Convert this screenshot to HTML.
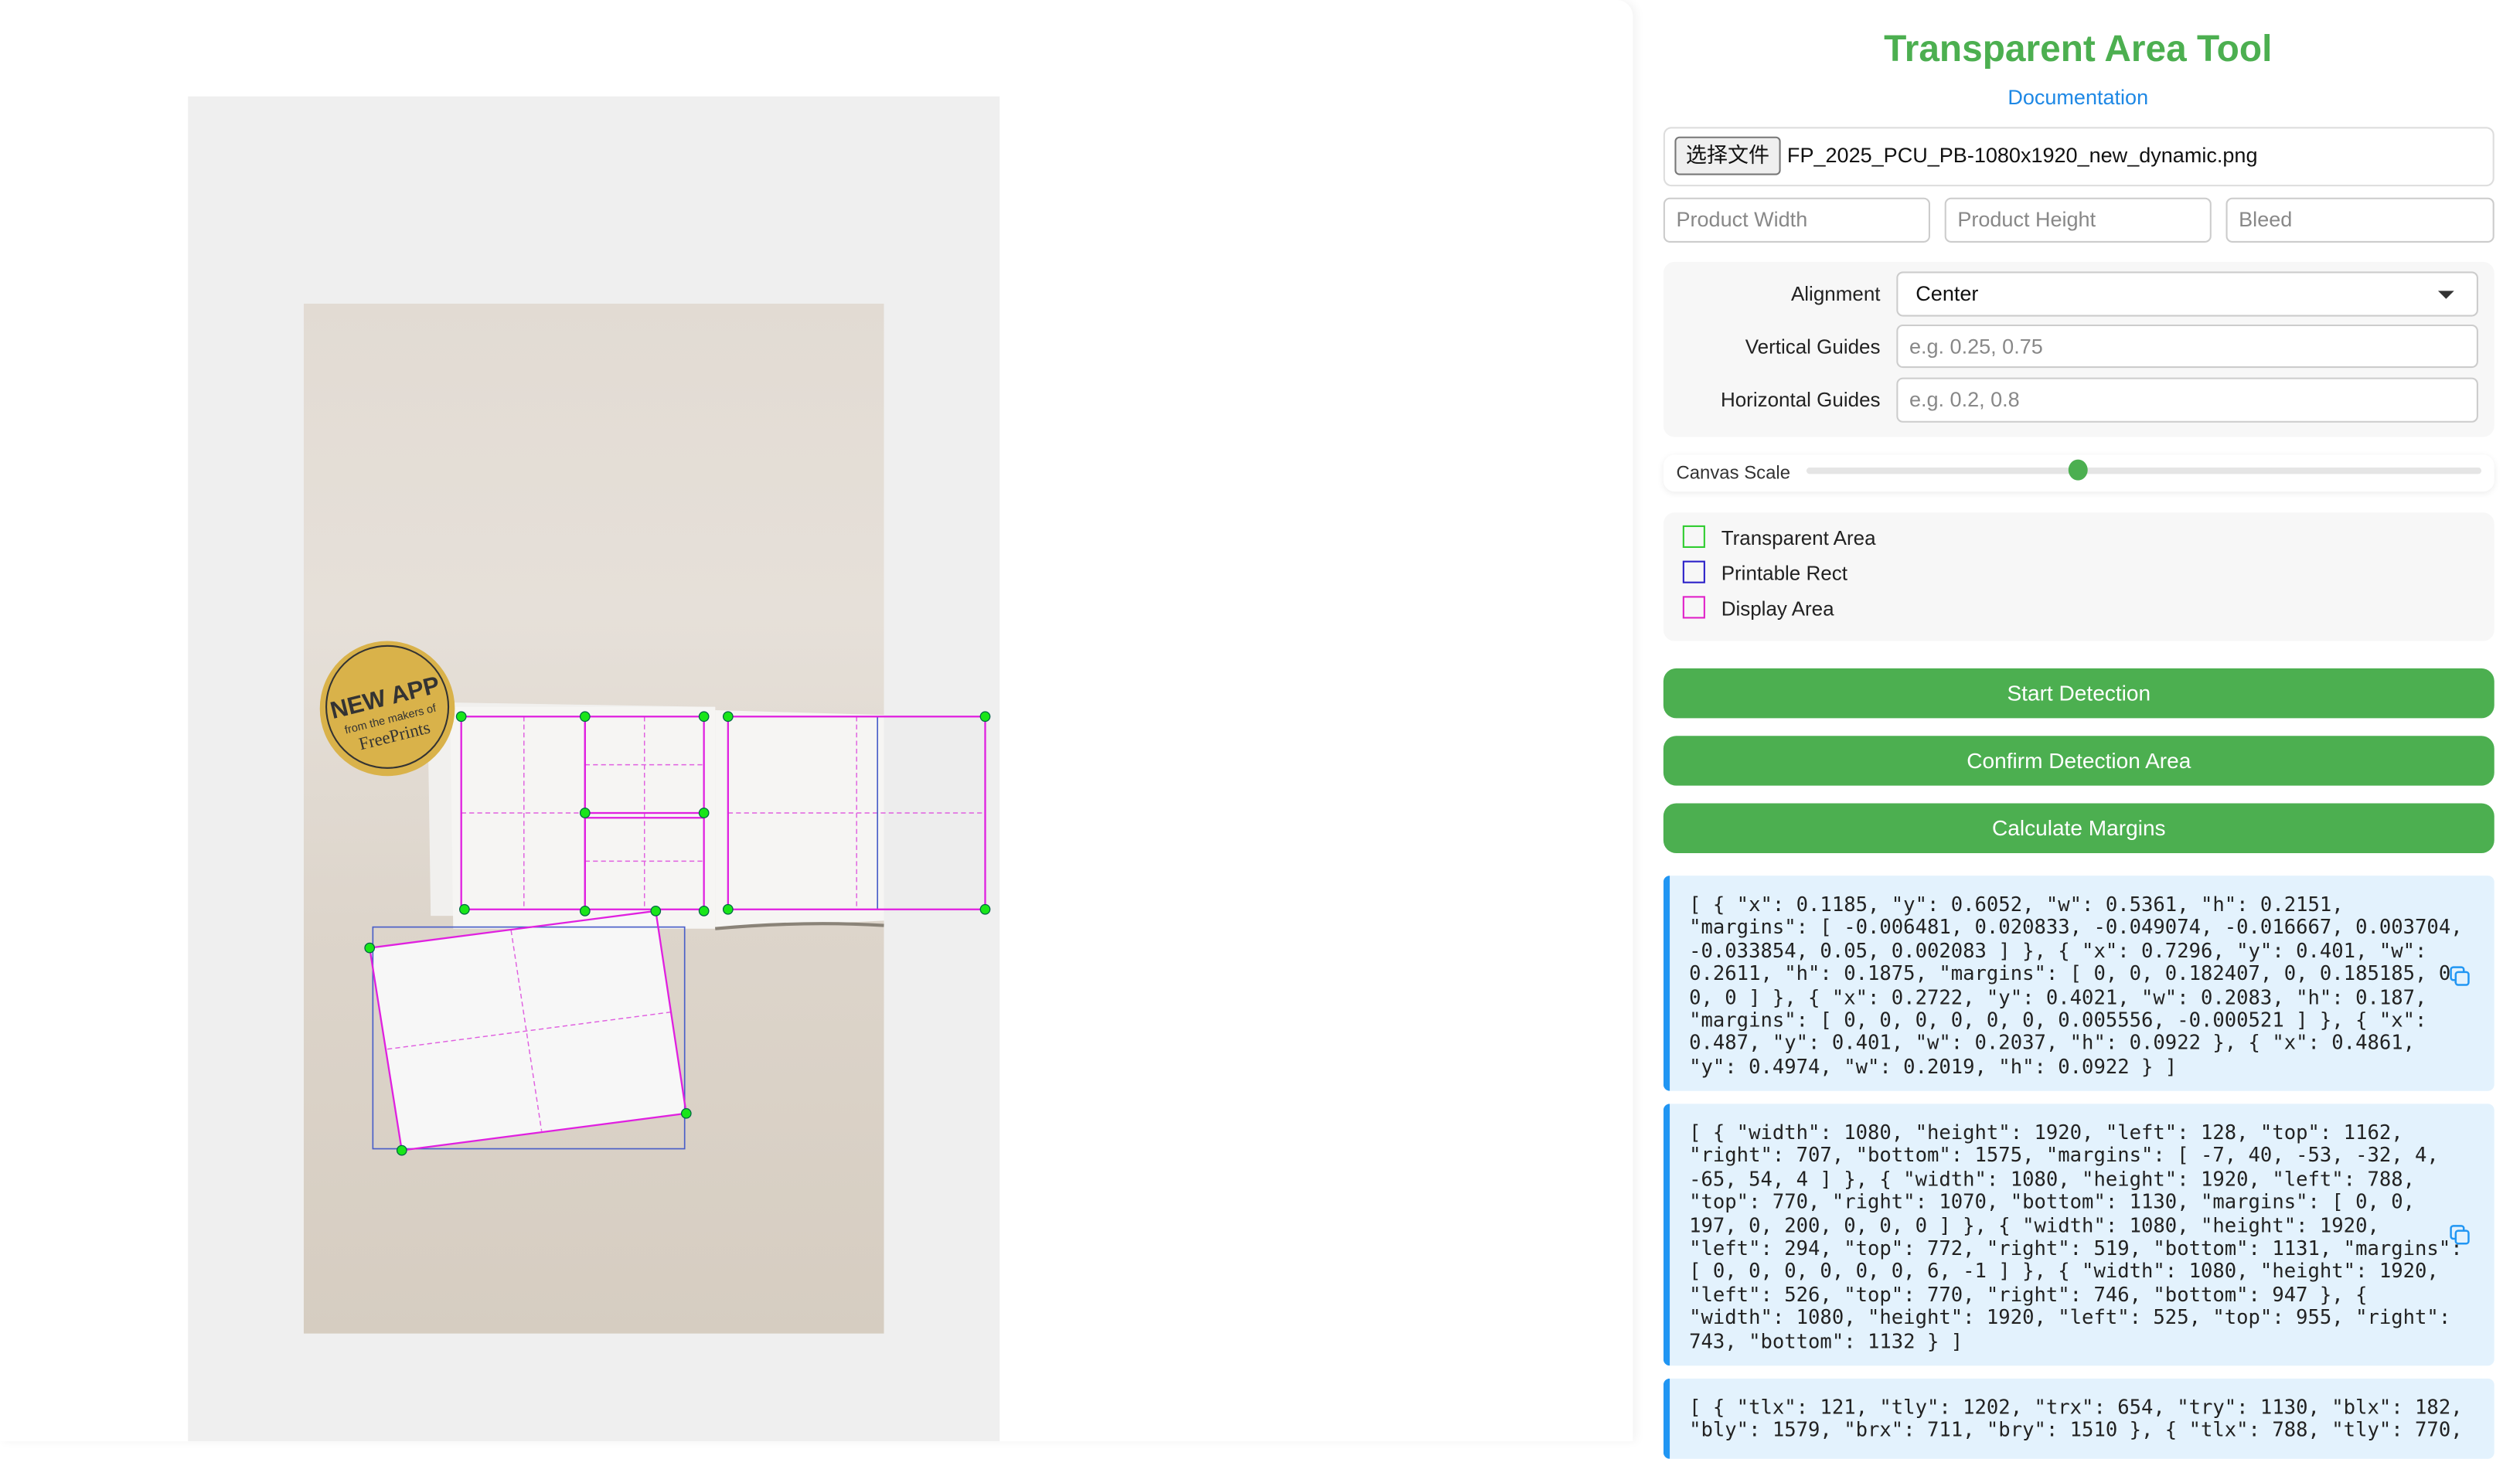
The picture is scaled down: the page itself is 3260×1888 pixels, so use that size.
<!DOCTYPE html>
<html><head><meta charset="utf-8">
<style>
html,body{margin:0;padding:0;width:3260px;height:1864px;overflow:hidden;background:#fff;}
#w{position:absolute;left:0;top:0;width:1568px;height:897px;transform:scale(2.07908);transform-origin:0 0;font-family:"Liberation Sans","Noto Sans CJK SC",sans-serif;}
.a{position:absolute;box-sizing:border-box;}
#left{left:0;top:0;width:1016px;height:897px;background:#fff;border-radius:0 10px 0 0;box-shadow:2px 0 6px rgba(0,0,0,0.05);}
#gray{left:117px;top:60px;width:505px;height:837px;background:#efefef;}
#img{left:189px;top:189px;width:361px;height:641px;background:linear-gradient(180deg,#e2dbd3 0%,#e6e0d9 30%,#ddd5cb 60%,#d6cdc1 100%);}
.in{border:1px solid #ccc;border-radius:4px;background:#fff;font-size:13px;color:#888;padding-left:7px;line-height:26px;}
.lbl{font-size:12.5px;color:#222;text-align:right;width:130px;left:1040px;}
.btn{left:1035px;width:517px;height:31px;background:#4caf50;border-radius:8px;color:#fff;font-size:13.5px;text-align:center;line-height:31px;}
.code{left:1035px;width:517px;background:#e3f2fd;border-left:4px solid #2196f3;border-radius:4px;padding:11px 0 0 12px;font-family:"DejaVu Sans Mono","Liberation Mono",monospace;font-size:12.3px;line-height:14.4px;color:#222;white-space:pre;overflow:hidden;}
.lg{left:1047px;width:14px;height:14px;border:1.3px solid;}
.lt{left:1071px;font-size:12.5px;color:#222;}
</style></head><body><div id="w">
<div class="a" style="left:1016px;top:0;width:552px;height:897px;background:#fff;"></div>
<div class="a" id="left"></div>
<div class="a" id="gray"></div>
<div class="a" id="img"></div>
<svg class="a" style="left:0;top:0" width="1016" height="897">
 <polygon points="266,437 445,440 445,570 268,570" fill="#f1f0ee"/>
 <polygon points="280,440 445,440 445,578 282,578" fill="#f6f5f3"/>
 <polygon points="445,442 550,445 550,573 445,578" fill="#f6f5f3"/>
 <path d="M445,578 Q500,573 550,576" stroke="#8a8378" stroke-width="2" fill="none"/>
 <rect x="550" y="445" width="65" height="123" fill="#ededed"/>
 <polygon points="230,590 408,567 427,693 250,716" fill="#f7f7f7"/>
 <circle cx="241" cy="441" r="42" fill="#d9b24a"/>
 <circle cx="241" cy="440" r="38" fill="none" stroke="#333" stroke-width="1"/>
 <g transform="rotate(-14 241 440)" font-family="Liberation Sans,sans-serif" fill="#333" text-anchor="middle">
  <text x="241" y="439" font-size="15" font-weight="bold">NEW APP</text>
  <text x="241" y="450" font-size="7">from the makers of</text>
  <text x="241" y="462" font-size="11" font-family="Liberation Serif,serif">FreePrints</text>
 </g>
 <g stroke="#e060e0" stroke-width="0.7" stroke-dasharray="3,2" fill="none">
  <line x1="326" y1="446" x2="326" y2="566"/><line x1="287" y1="506" x2="364" y2="506"/>
  <line x1="401" y1="446" x2="401" y2="566"/><line x1="364" y1="476" x2="438" y2="476"/><line x1="364" y1="536" x2="438" y2="536"/>
  <line x1="533" y1="446" x2="533" y2="566"/><line x1="453" y1="506" x2="613" y2="506"/>
  <line x1="318" y1="579" x2="337" y2="704"/><line x1="241" y1="653" x2="417" y2="630"/>
 </g>
 <g stroke="#4a5fc8" stroke-width="0.8" fill="none">
  <rect x="232" y="577" width="194" height="138"/>
  <line x1="546" y1="446" x2="546" y2="566"/>
 </g>
 <g stroke="#e020e0" stroke-width="1.1" fill="none">
  <rect x="287" y="446" width="77" height="120"/>
  <rect x="364" y="446" width="74" height="60"/>
  <rect x="364" y="509" width="74" height="57"/>
  <rect x="453" y="446" width="160" height="120"/>
  <polygon points="230,590 408,567 427,693 250,716"/>
 </g>
 <g fill="#19e619" stroke="#064" stroke-width="0.6">
  <circle cx="287" cy="446" r="3"/><circle cx="364" cy="446" r="3"/><circle cx="438" cy="446" r="3"/><circle cx="453" cy="446" r="3"/><circle cx="613" cy="446" r="3"/>
  <circle cx="289" cy="566" r="3"/><circle cx="364" cy="567" r="3"/><circle cx="438" cy="567" r="3"/><circle cx="453" cy="566" r="3"/><circle cx="613" cy="566" r="3"/>
  <circle cx="364" cy="506" r="3"/><circle cx="438" cy="506" r="3"/><circle cx="408" cy="567" r="3"/>
  <circle cx="230" cy="590" r="3"/><circle cx="427" cy="693" r="3"/><circle cx="250" cy="716" r="3"/>
 </g>
</svg>

<div class="a" style="left:1016px;top:17px;width:554px;text-align:center;font-size:23px;font-weight:bold;color:#4caf50;">Transparent Area Tool</div>
<div class="a" style="left:1016px;top:53px;width:554px;text-align:center;font-size:13px;color:#1e88e5;">Documentation</div>
<div class="a" style="left:1035px;top:79px;width:517px;height:37px;border:1px solid #ddd;border-radius:5px;"></div>
<div class="a" style="left:1042px;top:85px;width:66px;height:24px;border:1px solid #777;border-radius:3px;background:#efefef;font-size:13px;line-height:22px;text-align:center;color:#111;">选择文件</div>
<div class="a" style="left:1112px;top:89px;font-size:13px;color:#111;">FP_2025_PCU_PB-1080x1920_new_dynamic.png</div>
<div class="a in" style="left:1035px;top:123px;width:166px;height:28px;">Product Width</div>
<div class="a in" style="left:1210px;top:123px;width:166px;height:28px;">Product Height</div>
<div class="a in" style="left:1385px;top:123px;width:167px;height:28px;">Bleed</div>

<div class="a" style="left:1035px;top:163px;width:517px;height:109px;background:#f7f7f7;border-radius:7px;"></div>
<div class="a lbl" style="top:176px;">Alignment</div>
<div class="a lbl" style="top:209px;">Vertical Guides</div>
<div class="a lbl" style="top:242px;">Horizontal Guides</div>
<div class="a in" style="left:1180px;top:169px;width:362px;height:28px;color:#111;padding-left:11px;">Center</div>
<div class="a" style="left:1517px;top:181px;width:0;height:0;border-left:5px solid transparent;border-right:5px solid transparent;border-top:5px solid #333;"></div>
<div class="a in" style="left:1180px;top:202px;width:362px;height:27px;">e.g. 0.25, 0.75</div>
<div class="a in" style="left:1180px;top:235px;width:362px;height:28px;">e.g. 0.2, 0.8</div>

<div class="a" style="left:1035px;top:283px;width:517px;height:23px;background:#fff;border-radius:7px;box-shadow:0 1px 4px rgba(0,0,0,0.08);"></div>
<div class="a" style="left:1043px;top:289px;font-size:11.5px;color:#333;">Canvas Scale</div>
<div class="a" style="left:1124px;top:291px;width:420px;height:4px;background:#e5e5e5;border-radius:2px;"></div>
<div class="a" style="left:1287px;top:286px;width:12px;height:13px;background:#4caf50;border-radius:50%;"></div>

<div class="a" style="left:1035px;top:319px;width:517px;height:80px;background:#f7f7f7;border-radius:7px;"></div>
<div class="a lg" style="top:327px;border-color:#2ecc2e;"></div><div class="a lt" style="top:328px;">Transparent Area</div>
<div class="a lg" style="top:349px;border-color:#2a1fc8;"></div><div class="a lt" style="top:350px;">Printable Rect</div>
<div class="a lg" style="top:371px;border-color:#e020c8;"></div><div class="a lt" style="top:372px;">Display Area</div>

<div class="a btn" style="top:416px;">Start Detection</div>
<div class="a btn" style="top:458px;">Confirm Detection Area</div>
<div class="a btn" style="top:500px;">Calculate Margins</div>

<div class="a code" style="top:545px;height:134px;">[ { "x": 0.1185, "y": 0.6052, "w": 0.5361, "h": 0.2151,
"margins": [ -0.006481, 0.020833, -0.049074, -0.016667, 0.003704,
-0.033854, 0.05, 0.002083 ] }, { "x": 0.7296, "y": 0.401, "w":
0.2611, "h": 0.1875, "margins": [ 0, 0, 0.182407, 0, 0.185185, 0,
0, 0 ] }, { "x": 0.2722, "y": 0.4021, "w": 0.2083, "h": 0.187,
"margins": [ 0, 0, 0, 0, 0, 0, 0.005556, -0.000521 ] }, { "x":
0.487, "y": 0.401, "w": 0.2037, "h": 0.0922 }, { "x": 0.4861,
"y": 0.4974, "w": 0.2019, "h": 0.0922 } ]</div>
<div class="a code" style="top:687px;height:163px;">[ { "width": 1080, "height": 1920, "left": 128, "top": 1162,
"right": 707, "bottom": 1575, "margins": [ -7, 40, -53, -32, 4,
-65, 54, 4 ] }, { "width": 1080, "height": 1920, "left": 788,
"top": 770, "right": 1070, "bottom": 1130, "margins": [ 0, 0,
197, 0, 200, 0, 0, 0 ] }, { "width": 1080, "height": 1920,
"left": 294, "top": 772, "right": 519, "bottom": 1131, "margins":
[ 0, 0, 0, 0, 0, 0, 6, -1 ] }, { "width": 1080, "height": 1920,
"left": 526, "top": 770, "right": 746, "bottom": 947 }, {
"width": 1080, "height": 1920, "left": 525, "top": 955, "right":
743, "bottom": 1132 } ]</div>
<div class="a code" style="top:858px;height:50px;">[ { "tlx": 121, "tly": 1202, "trx": 654, "try": 1130, "blx": 182,
"bly": 1579, "brx": 711, "bry": 1510 }, { "tlx": 788, "tly": 770,</div>
<svg class="a" style="left:1524px;top:601px" width="14" height="14"><rect x="1" y="1" width="8" height="8" rx="1.5" fill="none" stroke="#2196f3" stroke-width="1.2"/><rect x="4" y="4" width="8" height="8" rx="1.5" fill="#e3f2fd" stroke="#2196f3" stroke-width="1.2"/></svg>
<svg class="a" style="left:1524px;top:762px" width="14" height="14"><rect x="1" y="1" width="8" height="8" rx="1.5" fill="none" stroke="#2196f3" stroke-width="1.2"/><rect x="4" y="4" width="8" height="8" rx="1.5" fill="#e3f2fd" stroke="#2196f3" stroke-width="1.2"/></svg>
</div></body></html>
